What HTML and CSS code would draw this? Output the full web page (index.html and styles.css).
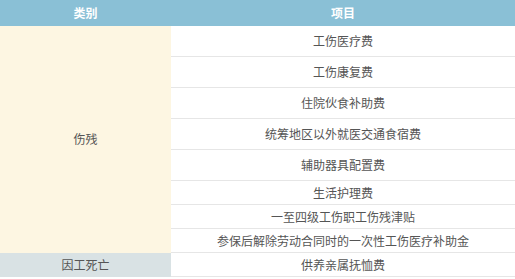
FILE: index.html
```html
<!DOCTYPE html>
<html lang="zh">
<head>
<meta charset="utf-8">
<link rel="stylesheet" href="styles.css">
</head>
<body>
<table class="tbl">
  <thead>
    <tr class="head"><th class="col-cat">类别</th><th>项目</th></tr>
  </thead>
  <tbody>
    <tr class="tall"><td class="cat cat-a" rowspan="8">伤残</td><td class="item">工伤医疗费</td></tr>
    <tr class="tall"><td class="item">工伤康复费</td></tr>
    <tr class="tall"><td class="item">住院伙食补助费</td></tr>
    <tr class="tall"><td class="item">统筹地区以外就医交通食宿费</td></tr>
    <tr class="tall"><td class="item">辅助器具配置费</td></tr>
    <tr class="short"><td class="item">生活护理费</td></tr>
    <tr class="short"><td class="item">一至四级工伤职工伤残津贴</td></tr>
    <tr class="short"><td class="item">参保后解除劳动合同时的一次性工伤医疗补助金</td></tr>
    <tr class="short"><td class="cat cat-b">因工死亡</td><td class="item">供养亲属抚恤费</td></tr>
  </tbody>
</table>
</body>
</html>
```

FILE: styles.css
```css
html, body {
  margin: 0;
  padding: 0;
  background: #ffffff;
}
body {
  font-family: "Noto Sans CJK SC", "Noto Sans", sans-serif;
  font-size: 12px;
  color: #555555;
}
.tbl {
  width: 515px;
  border-collapse: collapse;
  table-layout: fixed;
}
.col-cat {
  width: 171px;
}
.head th {
  height: 26px;
  padding: 0;
  background: #8ac0d6;
  color: #ffffff;
  font-weight: bold;
  font-size: 12px;
  line-height: 26px;
  text-align: center;
}
td {
  padding: 0;
  text-align: center;
  vertical-align: middle;
  line-height: 16px;
}
.item {
  border-bottom: 1px solid #e6e6e6;
}
.tall td.item {
  height: 30px;
}
.short td.item {
  height: 23px;
}
.cat-a {
  background: #fdf6e2;
}
.cat-b {
  background: #d9e2e4;
}
```
